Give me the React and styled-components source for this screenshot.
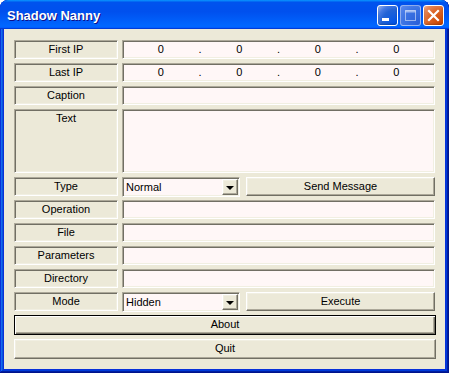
import React from 'react';
import styled, { createGlobalStyle, css } from 'styled-components';

const GlobalStyle = createGlobalStyle`
  html, body {
    margin: 0;
    padding: 0;
    background: #ffffff;
  }
  * {
    box-sizing: border-box;
  }
`;

const sunken = css`
  border-style: solid;
  border-width: 1px;
  border-color: #aca899 #ffffff #ffffff #aca899;
  box-shadow: inset 1px 1px #716f64, inset -1px -1px #f1efe2;
`;

const raised = css`
  border-style: solid;
  border-width: 1px;
  border-color: #ffffff #716f64 #716f64 #ffffff;
  box-shadow: inset -1px -1px #aca899, inset 1px 1px #f1efe2;
`;

const Window = styled.div`
  width: 449px;
  height: 373px;
  display: flex;
  flex-direction: column;
  background: #0831d9;
  border-radius: 8px 8px 0 0;
  overflow: hidden;
  box-shadow: inset -1px -1px #00138c, inset 1px 1px #0831d9,
    inset -2px -2px #001ea0, inset 2px 2px #166aee,
    inset -3px -3px #003bda, inset 3px 3px #0855dd;
  font-family: 'Liberation Sans', Arial, sans-serif;
`;

const TitleBar = styled.div`
  height: 29px;
  flex: none;
  display: flex;
  align-items: center;
  justify-content: space-between;
  padding: 0 5px 0 7px;
  background: linear-gradient(
    180deg,
    #0997ff,
    #0053ee 8%,
    #0050ee 40%,
    #06f 88%,
    #06f 93%,
    #005bff 95%,
    #003dd7 96%,
    #003dd7
  );
  border-radius: 8px 8px 0 0;
`;

const Title = styled.div`
  color: #ffffff;
  font-weight: bold;
  font-size: 13px;
  letter-spacing: 0;
  text-shadow: 1px 1px #0f1089;
  padding-top: 2px;
`;

const Controls = styled.div`
  display: flex;
  gap: 2px;
  padding-top: 1px;
`;

const CtrlButton = styled.div`
  width: 21px;
  height: 21px;
  border: 1px solid ${(p) => (p.$disabled ? 'rgba(255,255,255,0.45)' : '#ffffff')};
  border-radius: 3px;
  display: flex;
  align-items: center;
  justify-content: center;
  background: ${(p) =>
    p.$close
      ? 'radial-gradient(circle at 90% 90%, #cc4600 0%, #dc6527 55%, #e68b5f 85%, #f3c0a6 100%)'
      : p.$disabled
      ? 'radial-gradient(circle at 90% 90%, #2a60d8 0%, #3c73e3 60%, #5b8aee 100%)'
      : 'radial-gradient(circle at 90% 90%, #0054e9 0%, #2263d5 55%, #4479e4 75%, #a3bbec 100%)'};
  box-shadow: ${(p) => (p.$disabled ? 'none' : 'inset 0 -1px 2px rgba(0,0,0,0.25)')};
`;

const Body = styled.div`
  flex: 1;
  margin: 0 4px 4px 4px;
  background: #ece9d8;
  padding: 11px 9px 0 10px;
  display: grid;
  grid-template-columns: 104px 1fr;
  column-gap: 4px;
  row-gap: 4px;
  align-content: start;
  font-size: 11px;
  color: #000000;
`;

const Label = styled.div`
  ${sunken};
  height: ${(p) => (p.$tall ? '64px' : '19px')};
  background: #ece9d8;
  text-align: center;
  line-height: 17px;
`;

const Field = styled.div`
  ${sunken};
  height: ${(p) => (p.$tall ? '64px' : '19px')};
  background: #fff7f7;
  margin-right: 1px;
`;

const IpField = styled(Field)`
  display: grid;
  grid-template-columns: 1fr 3px 1fr 3px 1fr 3px 1fr;
  align-items: center;
  line-height: 17px;
  text-align: center;
`;

const ActionRow = styled.div`
  display: flex;
  gap: 6px;
  height: 19px;
`;

const Combo = styled.div`
  ${sunken};
  width: 118px;
  height: 20px;
  flex: none;
  background: #fff7f7;
  display: flex;
  align-items: center;
  padding: 1px 1px 1px 3px;
`;

const ComboText = styled.div`
  flex: 1;
  line-height: 16px;
`;

const ArrowButton = styled.div`
  ${raised};
  width: 16px;
  height: 16px;
  background: #ece9d8;
  display: flex;
  align-items: center;
  justify-content: center;
`;

const Arrow = styled.div`
  width: 0;
  height: 0;
  border-left: 4px solid transparent;
  border-right: 4px solid transparent;
  border-top: 4px solid #000000;
  margin-top: 1px;
`;

const Button = styled.div`
  ${raised};
  flex: 1;
  height: ${(p) => (p.$wide ? '20px' : '19px')};
  background: #ece9d8;
  text-align: center;
  line-height: 17px;
  margin-right: ${(p) => (p.$wide ? '0' : '1px')};
  grid-column: ${(p) => (p.$wide ? '1 / -1' : 'auto')};
`;

const DefaultButton = styled(Button)`
  border: 1px solid #000000;
  box-shadow: inset 1px 1px #ffffff, inset -1px -1px #716f64,
    inset -2px -2px #aca899;
`;

const IpAddress = () => (
  <IpField>
    <span>0</span>
    <span>.</span>
    <span>0</span>
    <span>.</span>
    <span>0</span>
    <span>.</span>
    <span>0</span>
  </IpField>
);

const ComboBox = ({ value }) => (
  <Combo>
    <ComboText>{value}</ComboText>
    <ArrowButton>
      <Arrow />
    </ArrowButton>
  </Combo>
);

const App = () => {
  return (
    <Window>
      <GlobalStyle />
      <TitleBar>
        <Title>Shadow Nanny</Title>
        <Controls>
          <CtrlButton>
            <svg width="19" height="19" viewBox="0 0 19 19">
              <rect x="4" y="12" width="7" height="3" fill="#ffffff" />
            </svg>
          </CtrlButton>
          <CtrlButton $disabled>
            <svg width="19" height="19" viewBox="0 0 19 19">
              <rect x="4.5" y="4.5" width="10" height="10" fill="none" stroke="rgba(255,255,255,0.5)" strokeWidth="1" />
              <rect x="4.5" y="4.5" width="10" height="2" fill="rgba(255,255,255,0.5)" />
            </svg>
          </CtrlButton>
          <CtrlButton $close>
            <svg width="19" height="19" viewBox="0 0 19 19">
              <path d="M5 5 L14 14 M14 5 L5 14" stroke="#ffffff" strokeWidth="2.2" strokeLinecap="square" />
            </svg>
          </CtrlButton>
        </Controls>
      </TitleBar>
      <Body>
        <Label>First IP</Label>
        <IpAddress />
        <Label>Last IP</Label>
        <IpAddress />
        <Label>Caption</Label>
        <Field />
        <Label $tall>Text</Label>
        <Field $tall />
        <Label>Type</Label>
        <ActionRow>
          <ComboBox value="Normal" />
          <Button>Send Message</Button>
        </ActionRow>
        <Label>Operation</Label>
        <Field />
        <Label>File</Label>
        <Field />
        <Label>Parameters</Label>
        <Field />
        <Label>Directory</Label>
        <Field />
        <Label>Mode</Label>
        <ActionRow>
          <ComboBox value="Hidden" />
          <Button>Execute</Button>
        </ActionRow>
        <DefaultButton $wide>About</DefaultButton>
        <Button $wide>Quit</Button>
      </Body>
    </Window>
  );
};

export default App;
